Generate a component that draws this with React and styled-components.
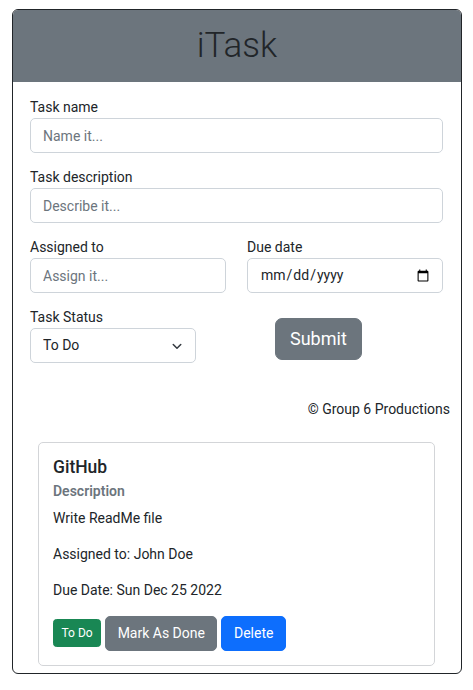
import React from "react";
import styled, { createGlobalStyle } from "styled-components";

const Global = createGlobalStyle`
  html, body { margin: 0; padding: 0; background: #fff; }
  body {
    font-family: Roboto, "Liberation Sans", Arial, sans-serif;
    font-size: 14px;
    line-height: 1.5;
    color: #212529;
  }
  *, *::before, *::after { box-sizing: border-box; }
`;

const Frame = styled.div`
  margin: 9px 11px 0 12px;
  width: 450px;
  border: 1px solid #212529;
  border-radius: 6px;
  overflow: hidden;
`;

const Header = styled.header`
  background: #6c757d;
  height: 72px;
  display: flex;
  align-items: center;
  justify-content: center;
`;

const Title = styled.h1`
  margin: 0;
  font-size: 35px;
  font-weight: 300;
  line-height: 1.2;
  color: #212529;
`;

const Form = styled.form`
  padding: 15px 18px 0 17px;
`;

const Group = styled.div`
  margin-bottom: 14px;
`;

const Label = styled.label`
  display: block;
  font-size: 14px;
  line-height: 21px;
`;

const Input = styled.input`
  display: block;
  width: 100%;
  height: 35px;
  padding: 6px 12px;
  font-family: inherit;
  font-size: 14px;
  line-height: 21px;
  color: #212529;
  background: #fff;
  border: 1px solid #ced4da;
  border-radius: 5px;
  outline: none;
  &::placeholder { color: #6c757d; }
  &::-webkit-calendar-picker-indicator { margin-right: -2px; }
`;

const TwoCols = styled.div`
  display: grid;
  grid-template-columns: 1fr 1fr;
  column-gap: 21px;
`;

const BottomRow = styled.div`
  display: grid;
  grid-template-columns: 166px auto;
  column-gap: 79px;
  align-items: start;
  justify-content: start;
`;

const SelectWrap = styled.div`
  position: relative;
  width: 166px;
`;

const Select = styled.select`
  display: block;
  width: 100%;
  height: 35px;
  padding: 6px 36px 6px 12px;
  font-family: inherit;
  font-size: 14px;
  line-height: 21px;
  color: #212529;
  background: #fff;
  border: 1px solid #ced4da;
  border-radius: 5px;
  appearance: none;
  -webkit-appearance: none;
  outline: none;
`;

const Chevron = styled.svg`
  position: absolute;
  right: 13px;
  top: 12px;
  pointer-events: none;
`;

const SubmitButton = styled.button`
  margin-top: 11px;
  padding: 6px 14px;
  font-family: inherit;
  font-size: 18px;
  line-height: 28px;
  color: #fff;
  background: #6c757d;
  border: 1px solid #6c757d;
  border-radius: 7px;
`;

const Footer = styled.p`
  margin: 36px 0 0;
  padding-right: 11px;
  text-align: right;
  font-size: 14px;
  line-height: 21px;
`;

const Card = styled.div`
  margin: 22px 26px 7px 25px;
  border: 1px solid #d3d5d8;
  border-radius: 5px;
  padding: 14px;
`;

const CardTitle = styled.h5`
  margin: 0 0 5px;
  font-size: 17.5px;
  font-weight: 500;
  line-height: 1.2;
`;

const CardSubtitle = styled.h6`
  margin: 0 0 8px;
  font-size: 14px;
  font-weight: 600;
  line-height: 1.2;
  color: #6c757d;
`;

const CardText = styled.p`
  margin: 0 0 15px;
  font-size: 14px;
  line-height: 21px;
`;

const Actions = styled.div`
  display: flex;
  align-items: center;
  gap: 4px;
`;

const Btn = styled.button`
  font-family: inherit;
  color: #fff;
  background: ${(p) => p.$bg};
  border: 1px solid ${(p) => p.$bg};
  font-size: ${(p) => (p.$small ? "12px" : "14px")};
  line-height: ${(p) => (p.$small ? "18px" : "21px")};
  padding: ${(p) => (p.$small ? "4px 7.5px" : "6px 11.5px")};
  border-radius: ${(p) => (p.$small ? "3.5px" : "5px")};
`;

export default function App() {
  return (
    <>
      <Global />
      <Frame>
        <Header>
          <Title>iTask</Title>
        </Header>
        <Form onSubmit={(e) => e.preventDefault()}>
          <Group>
            <Label>Task name</Label>
            <Input type="text" placeholder="Name it..." />
          </Group>
          <Group>
            <Label>Task description</Label>
            <Input type="text" placeholder="Describe it..." />
          </Group>
          <TwoCols>
            <Group>
              <Label>Assigned to</Label>
              <Input type="text" placeholder="Assign it..." />
            </Group>
            <Group>
              <Label>Due date</Label>
              <Input type="date" />
            </Group>
          </TwoCols>
          <BottomRow>
            <div>
              <Label>Task Status</Label>
              <SelectWrap>
                <Select defaultValue="todo">
                  <option value="todo">To Do</option>
                  <option value="progress">In Progress</option>
                  <option value="review">Review</option>
                  <option value="done">Done</option>
                </Select>
                <Chevron width="12" height="12" viewBox="0 0 16 16" fill="none">
                  <path d="M3 6l5 5 5-5" stroke="#343a40" strokeWidth="2" strokeLinecap="round" strokeLinejoin="round" />
                </Chevron>
              </SelectWrap>
            </div>
            <SubmitButton type="submit">Submit</SubmitButton>
          </BottomRow>
        </Form>
        <Footer>© Group 6 Productions</Footer>
        <Card>
          <CardTitle>GitHub</CardTitle>
          <CardSubtitle>Description</CardSubtitle>
          <CardText>Write ReadMe file</CardText>
          <CardText>Assigned to: John Doe</CardText>
          <CardText>Due Date: Sun Dec 25 2022</CardText>
          <Actions>
            <Btn $small $bg="#198754">To Do</Btn>
            <Btn $bg="#6c757d">Mark As Done</Btn>
            <Btn $bg="#0d6efd">Delete</Btn>
          </Actions>
        </Card>
      </Frame>
    </>
  );
}
